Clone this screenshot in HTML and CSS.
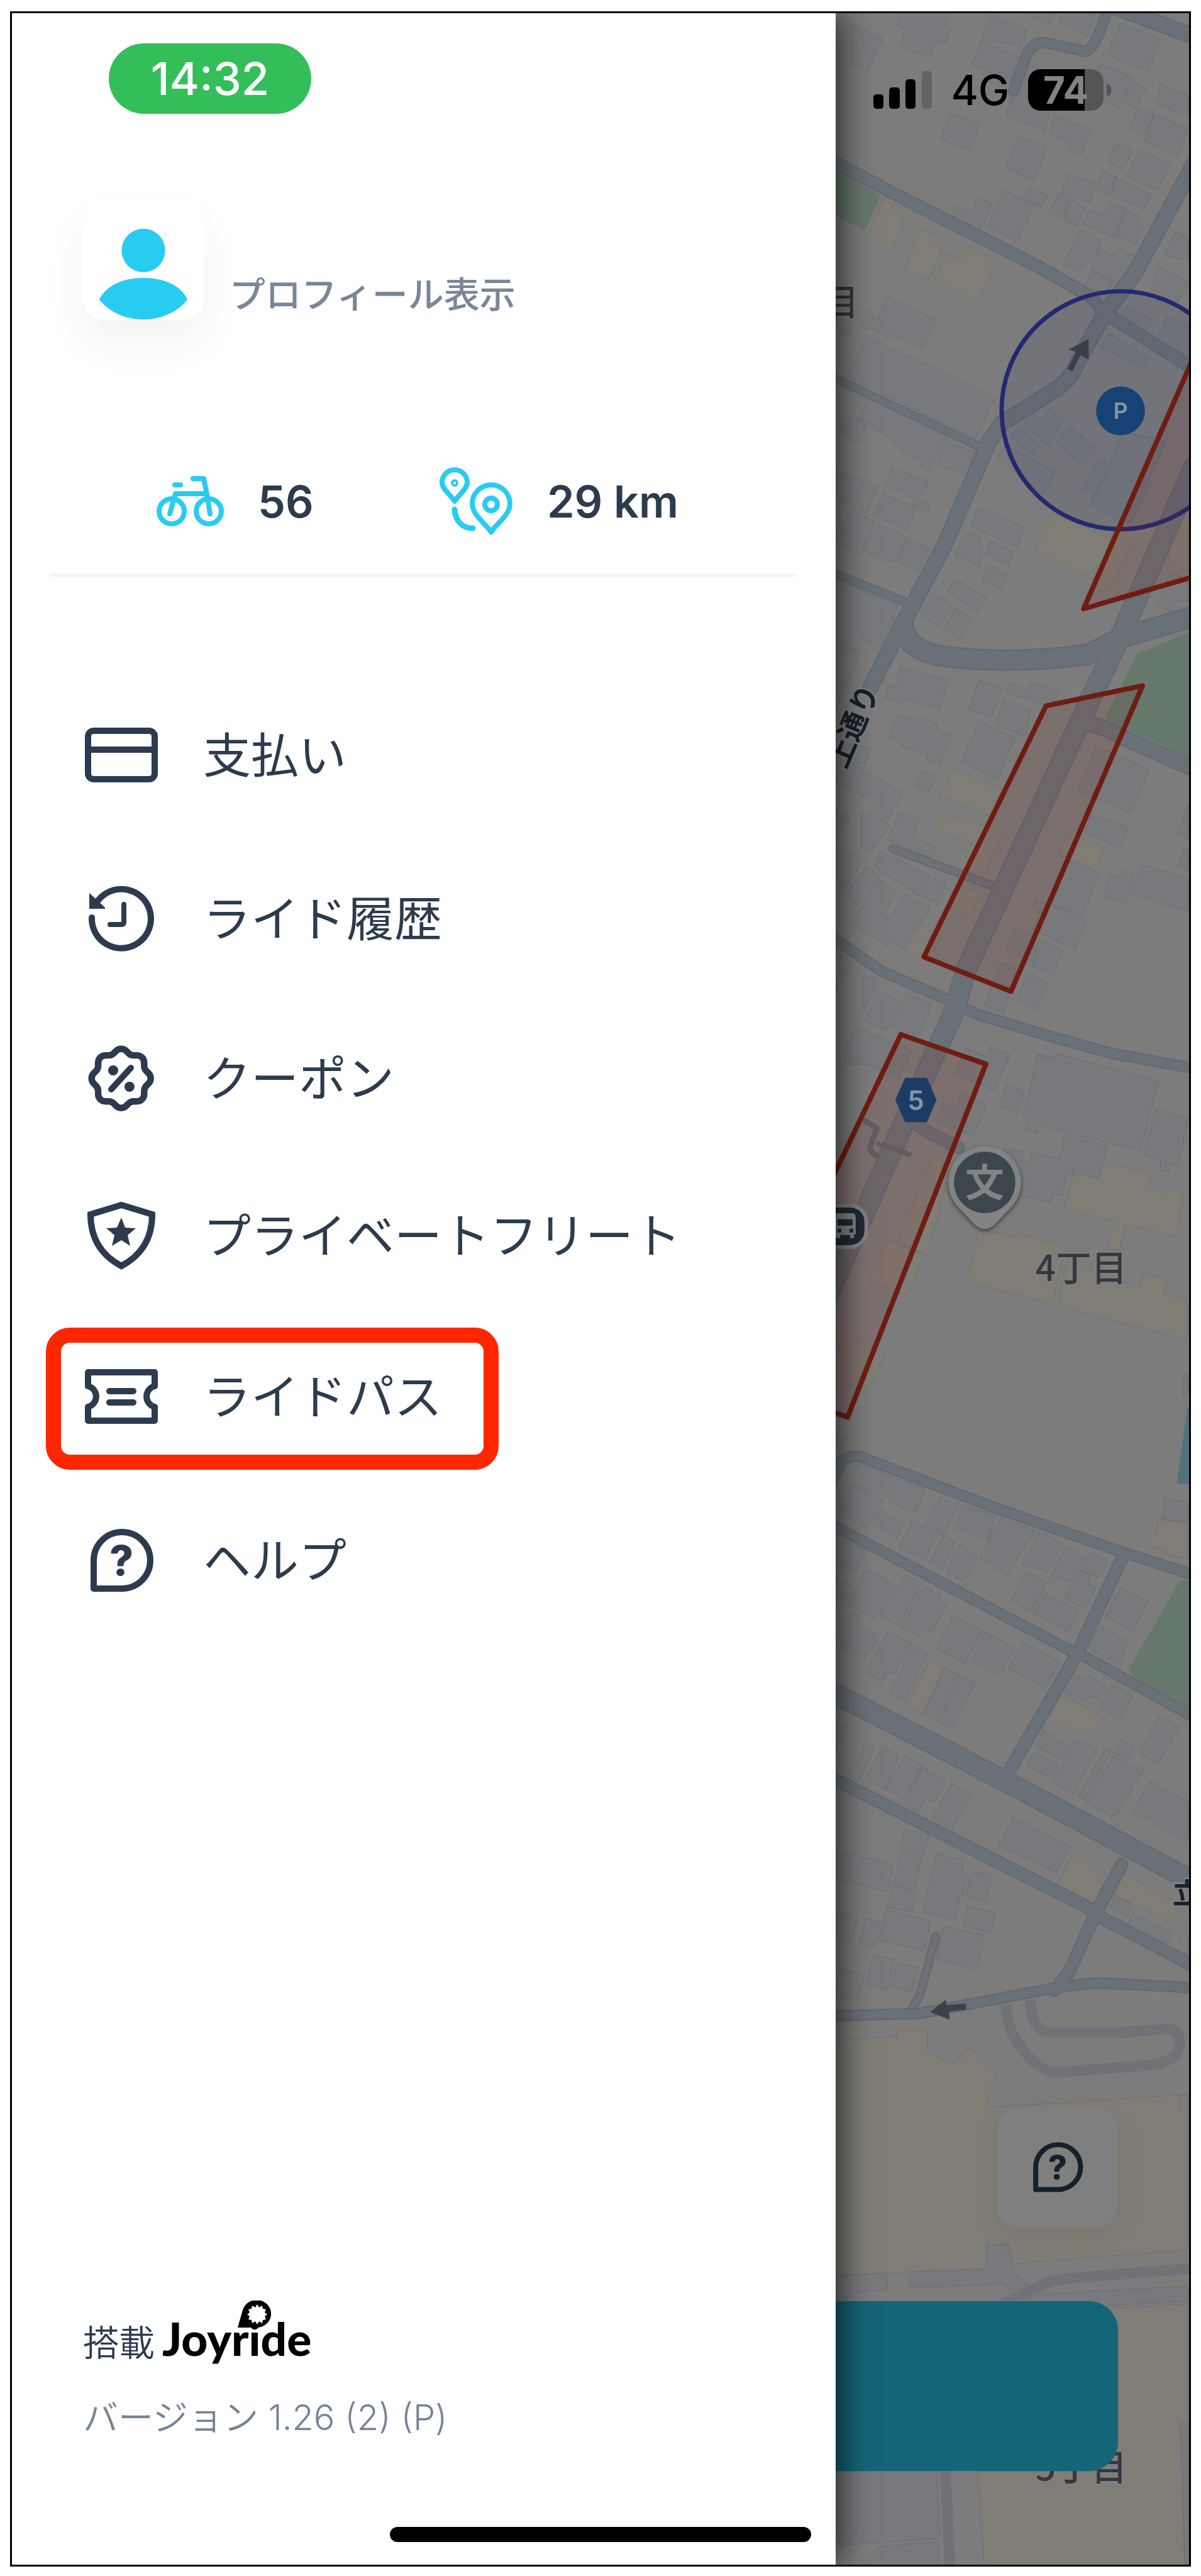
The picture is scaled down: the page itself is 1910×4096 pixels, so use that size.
FILE: index.html
```html
<!DOCTYPE html>
<html lang="ja">
<head>
  <meta charset="UTF-8">
  <meta name="viewport" content="width=device-width, initial-scale=1.0">
  <title>メニュー</title>
  <link rel="stylesheet" href="styles.css">
</head>
<body>
  <div class="phone">
    <aside class="drawer">
      <div class="clock">14:32</div>

      <a class="profile" href="#profile">
        <span class="avatar">
          <svg viewBox="0 0 196 196" aria-hidden="true">
            <circle cx="98" cy="84" r="35"/>
            <path d="M27 163C38 140 66 128 98 128S158 140 169 163C152 184 126 195 98 195S44 184 27 163Z"/>
          </svg>
        </span>
        <span class="profile-text">プロフィール表示</span>
      </a>

      <div class="stats">
        <div class="stat">
          <svg class="bike" viewBox="0 0 107 80" aria-hidden="true">
            <circle cx="24" cy="56" r="20"/>
            <circle cx="83" cy="56" r="20"/>
            <path d="M58 4H75L81 34L85 60M79 28H30L21 60"/>
            <path d="M29 14H38" stroke-width="8"/>
          </svg>
          <span>56</span>
        </div>
        <div class="stat">
          <svg class="pins" viewBox="0 0 117 109" aria-hidden="true">
            <path d="M24 54C18 44 4 35 4 24A20 20 0 0 1 44 24C44 35 30 44 24 54Z"/>
            <circle cx="24" cy="25" r="2"/>
            <path d="M82 103C74 90 52 76 52 58A30 30 0 0 1 112 58C112 76 90 90 82 103Z"/>
            <circle cx="82" cy="59" r="10"/>
            <path d="M24 67C25 85 36 97 53 97" stroke-width="9"/>
          </svg>
          <span>29 km</span>
        </div>
      </div>

      <nav class="menu">
        <a href="#payment">
          <svg viewBox="0 0 116 108" aria-hidden="true">
            <rect x="5" y="15" width="106" height="77" rx="9"/>
            <path d="M5 45H111"/>
          </svg>
          <span>支払い</span>
        </a>
        <a href="#history">
          <svg viewBox="0 0 116 108" aria-hidden="true">
            <path d="M20 26A47 47 0 1 1 11 52"/>
            <path d="M62 31V59Q62 63 58 63H40" stroke-width="8"/>
            <path class="solid" d="M7 13L17 22L32 36V38H7Z"/>
          </svg>
          <span>ライド履歴</span>
        </a>
        <a href="#coupon">
          <svg viewBox="0 0 116 108" aria-hidden="true">
            <path class="rosette" transform="translate(-5 -9) scale(5.22)" d="M5 7.2a2.2 2.2 0 0 1 2.2 -2.2h1a2.2 2.2 0 0 0 1.55 -.64l.7 -.7a2.2 2.2 0 0 1 3.12 0l.7 .7c.412 .41 .97 .64 1.55 .64h1a2.2 2.2 0 0 1 2.2 2.2v1c0 .58 .23 1.138 .64 1.55l.7 .7a2.2 2.2 0 0 1 0 3.12l-.7 .7a2.2 2.2 0 0 0 -.64 1.55v1a2.2 2.2 0 0 1 -2.2 2.2h-1a2.2 2.2 0 0 0 -1.55 .64l-.7 .7a2.2 2.2 0 0 1 -3.12 0l-.7 -.7a2.2 2.2 0 0 0 -1.55 -.64h-1a2.2 2.2 0 0 1 -2.2 -2.2v-1a2.2 2.2 0 0 0 -.64 -1.55l-.7 -.7a2.2 2.2 0 0 1 0 -3.12l.7 -.7a2.2 2.2 0 0 0 .64 -1.55v-1"/>
            <path d="M73 37L42 71"/>
            <circle class="solid" cx="45" cy="41" r="8"/>
            <circle class="solid" cx="71" cy="67" r="8"/>
          </svg>
          <span>クーポン</span>
        </a>
        <a href="#fleet">
          <svg viewBox="0 0 116 108" aria-hidden="true">
            <path class="shield" d="M58 5L107 20C107 55 92 84 58 102C24 84 9 55 9 20Z"/>
            <path class="solid" d="M58 25L64 41L81 42L68 53L72 70L58 61L43 70L47 53L34 42L51 41Z"/>
          </svg>
          <span>プライベートフリート</span>
        </a>
        <a class="current" href="#ridepass">
          <svg viewBox="0 0 116 108" aria-hidden="true">
            <path d="M5 15H111V37A17 17 0 0 0 111 70V92H5V70A17 17 0 0 0 5 37Z"/>
            <path d="M39 45H77M39 63H77"/>
          </svg>
          <span>ライドパス</span>
        </a>
        <a href="#help">
          <svg viewBox="0 0 116 108" aria-hidden="true">
            <path d="M14 99V54A45 45 0 1 1 59 99Z"/>
            <text x="58" y="78">?</text>
          </svg>
          <span>ヘルプ</span>
        </a>
      </nav>

      <footer class="footer">
        <div class="powered">
          <span>搭載</span>
          <span class="logo">Joyride
            <svg viewBox="0 0 54 44" aria-hidden="true">
              <path d="M0 43L8 15A23 22 0 1 1 31 43Z"/>
              <path class="sun" d="M31 6L34 11L39 8L40 13L45 14L43 19L47 22L43 25L45 30L40 31L39 36L34 33L31 38L28 33L23 36L22 31L17 30L19 25L15 22L19 19L17 14L22 13L23 8L28 11Z"/>
            </svg>
          </span>
        </div>
        <p class="version">バージョン 1.26 (2) (P)</p>
      </footer>
    </aside>

    <main class="map">
      <svg class="map-canvas" viewBox="1338 21 564 4081" preserveAspectRatio="xMinYMin slice" aria-hidden="true">
        <defs>
          <g id="roads">
            <path class="w16" d="M1622 145L1638 101Q1648 66 1672 68L1737 82Q1752 80 1772 15"/>
            <path class="w24" d="M1760 2L1910 58"/>
            <path class="w20" d="M1330 256L1435 311L1569 379L1664 427L1745 473L1768 500L1910 589"/>
            <path class="w24" d="M1910 262L1814 439L1768 500L1726 575Q1712 610 1684 625L1603 676L1584 703L1511 872L1450 987L1393 1098"/>
            <path class="w12" d="M1330 601L1576 717M1330 913L1454 963"/>
            <path class="w32" d="M1446 1000Q1450 1036 1504 1047Q1615 1062 1741 1045L1795 1018L1910 984"/>
            <path class="w32" d="M1910 746L1794 1014L1745 1116L1546 1549L1527 1616L1492 1692L1442 1804L1389 1926L1300 2125"/>
            <path class="w24" d="M1741 1155Q1770 1162 1798 1178L1910 1228"/>
            <path class="w16" d="M1330 1495L1412 1551L1504 1591L1565 1620L1664 1650L1779 1682L1910 1706"/>
            <path class="w16" d="M1330 2370L1344 2340Q1354 2322 1377 2326L1588 2406L1795 2478L1910 2515"/>
            <path class="w16" d="M1330 2434L1714 2636L1733 2644L1910 2742"/>
            <path class="w20" d="M1795 2489L1722 2644L1615 2828"/>
            <path class="w32" d="M1330 2701L1611 2845L1910 3005"/>
            <path class="w20" d="M1330 2838L1741 3046L1764 3063L1910 3139"/>
            <path class="w20" d="M1795 2977L1752 3058L1710 3150L1687 3178"/>
            <path class="w16" d="M1330 3219L1473 3215L1684 3175L1752 3166L1910 3174"/>
            <path class="w20" d="M1450 1785L1490 1810L1534 1832"/>
          </g>
          <g id="lanes">
            <path class="w12" d="M1429 1355L1595 1417M1498 3092L1473 3184L1460 3208"/>
          </g>
        </defs>

        <rect class="ground" x="1300" y="0" width="640" height="4120"/>

        <!-- parks and water -->
        <path class="park" d="M1338 270L1410 313L1385 368L1338 345ZM1819 1044L1910 1007V1214L1768 1147ZM1888 2524H1910V2732L1818 2682L1806 2666Z"/>
        <path class="water" d="M1900 2248L1910 2240V2370L1883 2369Z"/>

        <!-- tile 1 -->
        <g transform="translate(1320 0) scale(.3827 .676)">
          <path class="block" d="M116 55L243 92L180 168L116 153ZM325 20L305 62L340 70L315 108L437 137L468 98L505 102L530 68L500 60L520 25ZM695 35L846 70L815 108L775 104L655 95ZM655 97L808 135L770 192L615 152ZM800 20L965 30L940 56ZM1010 20L975 46L1095 87L1130 35ZM1235 55L1400 92L1350 168L1182 130ZM820 145L965 180L955 230L920 310L760 272ZM1150 150L1287 182L1232 255L1130 230ZM530 268L648 293L607 356L486 328ZM958 268L1116 310L1070 365L1020 352V340L943 318ZM810 322L927 348L875 426L756 398ZM1290 193L1343 208L1298 255L1252 240ZM1400 198L1518 225V275L1390 248ZM1310 253L1375 270L1338 320L1272 303ZM1375 270L1518 302L1478 368L1338 332ZM1220 338L1287 355L1245 400L1182 382ZM1318 352L1446 388L1390 450L1262 413ZM1018 412L1135 432L1108 478L992 456ZM1160 404L1220 418L1180 460L1132 446ZM1215 420L1364 458L1332 494L1196 462ZM980 458L1025 470L992 515L938 500ZM1025 470L1090 490L1055 536L1000 518ZM1105 497L1168 507L1190 478L1250 490L1212 560L1078 530ZM1255 497L1310 512V525L1330 535L1300 578L1218 555ZM1068 541L1155 568L1140 600L1060 640L995 626ZM1150 592L1205 604L1232 587L1300 607L1228 670L1110 640ZM1125 640L1200 668L1180 690L1080 680ZM1465 548L1518 560V615L1418 602ZM1395 628L1518 665L1478 712L1365 682ZM747 449L876 485L806 570L680 535ZM855 442L930 463L905 490L836 470ZM550 488L615 500L642 466L700 482L650 543L533 510ZM268 702L468 757L412 822L285 790L278 799L200 778ZM125 720L213 745L190 777L125 768L98 795L47 780V700ZM178 793L712 940L630 1037L94 888ZM185 938L235 950L513 1030L436 1112L400 1103V1093L338 1070L225 1015L145 987ZM88 983L143 990L178 1000L140 1050L60 1020ZM510 1043L628 1067L590 1123L470 1097ZM47 1108L225 1150L178 1211L47 1180ZM285 1105L433 1137L415 1163L375 1178L250 1145ZM245 1167L382 1200L343 1252L205 1217ZM375 1180L443 1190L428 1208L365 1193ZM110 1205L210 1232L155 1307L50 1280ZM230 1238L343 1270L303 1328L240 1322L160 1297ZM345 1275L437 1295L392 1351L312 1330ZM647 1198L835 1247L803 1293L610 1242ZM590 1257L652 1271V1340L546 1312ZM692 1277L786 1303L770 1336L673 1312ZM685 1335L766 1356L738 1392L655 1370ZM550 1368L677 1413L640 1447L513 1397ZM458 1398L535 1430L475 1480L402 1452ZM550 1437L618 1463L565 1510L498 1482ZM1262 722L1366 755L1335 795L1230 757ZM1185 788L1354 844L1328 872L1152 820ZM1430 748L1518 770V840L1385 802ZM940 964L1000 993L932 1052L832 1002L868 978L908 990ZM1028 1007L1137 1060L1077 1100L968 1045ZM812 1007L900 1055L868 1075L775 1028ZM755 1050L963 1115L910 1167L725 1082ZM1250 1020L1423 1042L1280 1236L1110 1192ZM1145 1085L1200 1100L1130 1170L1075 1155ZM47 1370L307 1430L235 1530L125 1500L107 1525L150 1540L130 1568H47ZM1440 1352L1518 1370V1420H1470L1448 1445L1388 1430Z"/>
          <path class="shop" d="M243 475L275 480L322 508L335 525L277 597L173 565ZM405 540L475 560L462 580L493 590L435 660L331 635ZM512 598L562 612L596 577L718 615L638 715L457 664ZM950 1210L1276 1293L1195 1388L875 1305ZM1440 1290L1518 1240V1350L1440 1330Z"/>
        </g>

        <!-- tile 2 -->
        <g transform="translate(1320 1000) scale(.3827 .4464)">
          <path class="block" d="M47 70L152 88L47 300ZM315 149L514 190L482 293L325 260L320 275L253 258L270 213L295 218ZM305 318L385 337L400 325L470 350V372L530 392L482 496L430 478V463L320 430V410L270 398ZM647 192L741 222L698 325L601 296ZM775 203L845 225L865 203L980 230L955 290L760 237ZM747 265L858 300L852 350L840 393L714 354ZM647 340L796 399L720 546L572 488ZM105 420L193 437L167 493L110 480ZM47 480L120 490L327 597L270 684L195 650L217 615L183 597L168 610L47 560ZM405 516L463 537L433 597L377 574ZM47 650L108 683L47 765ZM153 672L175 683L202 662L275 712L190 806L153 788ZM317 666L395 692L373 755L467 794L448 830L263 765ZM47 790L162 830L85 945L47 900ZM235 806L440 890L395 965L253 885L205 858ZM455 903L507 922L473 991L403 965ZM180 856L232 900L140 999L85 963ZM235 908L302 955L240 1032L265 1042L202 1115L108 1060ZM343 955L440 1013L325 1155L275 1127L262 1145L217 1117ZM70 1170L125 1207L47 1305ZM162 1255H213V1312L163 1373ZM232 1305L316 1346L258 1447L170 1410ZM340 1311L447 1352L393 1465L282 1433ZM130 1432L361 1522L340 1568H80ZM1135 430L1355 510L1277 669L1056 588ZM1115 670L1267 722L1235 790L1085 740ZM1020 838L1151 885L1075 1038L950 995ZM880 975L1095 1052L1048 1153L870 1088L900 1018L870 1005ZM1190 888L1228 900L1237 875L1293 890L1262 991L1162 968ZM1325 853L1518 900V1020L1280 957ZM1518 640V763L1470 745ZM1505 793L1518 797V875L1477 858ZM792 1080L898 1117L870 1200L756 1155ZM910 1125L998 1158L952 1247L865 1215ZM735 1203L800 1225L750 1383L667 1355ZM850 1243L937 1276L888 1370L803 1337ZM590 1510L680 1540L695 1503L774 1535L760 1568H570ZM890 1532L965 1545L972 1530L1140 1568H880Z"/>
          <path class="shop" d="M540 509L740 583L695 680L478 607ZM490 672L550 688L560 670L745 738L662 902L547 866L572 798L635 810L620 775L510 742L503 756L453 738ZM1018 738L1167 795L1134 872L980 815ZM570 925L649 958L610 1038L525 1010ZM405 1065L488 1110L413 1216L330 1172Z"/>
        </g>

        <!-- tile 3 -->
        <g transform="translate(1320 1600) scale(.3827 .5102)">
          <path class="block" d="M130 77L361 153L313 240L80 162ZM590 145L675 172L697 140L775 165L707 277L542 225ZM575 287L677 318L622 418L468 370L498 316L552 328ZM762 258L836 280L807 347L730 326ZM890 166L966 176L975 162L1393 247L1322 464L1075 420V432L1180 450L1142 550L1040 525L1035 545L1012 542L993 605L950 600L942 628L790 600L750 458L828 470L822 498L852 506L870 472L983 491L1007 407L895 384L888 410L843 400L852 360L830 353ZM1382 336L1518 363L1478 510L1442 505L1437 530L1400 525L1405 495L1335 480ZM47 1350L93 1363L73 1400L47 1395ZM1500 1165L1518 1168V1230H1495Z"/>
          <path class="shop" d="M453 485L530 505L430 793L305 752ZM262 747L416 790L345 920L190 870ZM85 1042L255 1095L190 1205L47 1165V1115ZM1163 500L1368 538L1353 580L1418 597L1422 583L1500 600L1467 735L1255 697L1232 775H1177L1205 687L998 650L1040 535L1145 552ZM645 712L805 736L812 724L1007 765L950 945L594 875ZM1000 838L1020 815L1115 840L1313 895L1332 847L1433 865L1415 913L1518 935V1058L975 952Z"/>
        </g>

        <!-- tile 4 -->
        <g transform="translate(1320 2300) scale(.3827 .574)">
          <path class="block" d="M140 65L290 103L260 158L150 132L162 108L120 95ZM300 105L419 135L380 200L265 170ZM118 122L240 165L180 245L58 203ZM232 193L335 230L302 272L197 235ZM485 157L560 185L495 263L419 235ZM575 181L711 207L687 275L550 245ZM367 225L467 260L420 333L310 297ZM735 216L880 250L762 375L648 330ZM495 265L547 283L492 358L438 340ZM563 290L640 322L598 380L565 388L507 366ZM893 256L920 260L995 288L930 368L865 350L858 357L825 345ZM1008 295L1087 323L1030 394L975 382L958 403L935 393ZM1110 310L1175 332L1180 345L1145 382L1072 363ZM843 367L928 397L863 476L777 444ZM1068 363L1105 373V400L1134 410L1088 468L1003 440ZM925 423L1062 474L1015 533L875 483ZM47 270L175 307L123 369L47 345ZM47 375L122 410L75 462L47 458ZM175 358L281 398L208 496L95 458ZM340 374L404 398L312 514L228 486L292 400L310 407ZM417 407L487 435L483 447L510 458L450 530L415 522L395 545L322 520ZM112 478L151 488L137 510L225 548L175 603L127 592L115 598L72 580L77 565L52 553ZM268 529L363 566L295 648L268 643L240 671L173 645ZM375 571L429 594L332 727L271 706ZM505 631L565 653L470 785L412 763ZM580 655L629 673L530 803L480 782ZM540 486L658 529L585 621L469 578ZM670 534L794 577L735 653L613 612ZM830 561L982 618L923 689L770 634ZM1237 407L1353 447L1288 530L1172 489ZM1150 516L1272 562L1227 622L1100 577ZM1030 646L1092 667L1108 654L1175 690L1145 720L1110 711L1093 725L993 695ZM1197 678L1285 710L1236 775L1148 744ZM1400 767L1481 798L1395 898L1314 870ZM913 807L1023 848L990 888L882 850ZM875 867L974 900L948 937L843 907ZM1047 829L1137 860L1042 983L950 953ZM1178 851L1200 860L1085 1000L1058 990ZM1237 829L1294 852L1262 892L1212 870ZM1205 878L1302 915L1312 904L1331 914L1223 1040L1200 1045L1093 1007ZM1358 947L1518 1003V1115L1286 1034ZM47 780L95 798L47 860ZM172 844L205 857L145 945L100 930ZM243 853L312 877L275 932L258 970L170 943ZM335 877L412 906L330 998L258 970ZM412 907L505 945L460 1007L422 997L392 1033L330 1010ZM530 955L614 988L533 1080L452 1050ZM790 1047L1027 1129L970 1202L727 1129ZM47 1140L288 1180L262 1256L47 1220ZM338 1081L437 1097L412 1160L316 1143ZM318 1150L404 1165L375 1248L290 1236ZM285 1240L383 1255L363 1312L260 1298ZM467 1149L582 1167L575 1197L596 1205L580 1265L568 1263L543 1333L411 1313ZM610 1211L640 1200L699 1208L677 1281L593 1270ZM598 1295L715 1315L695 1370L576 1350ZM257 1307L444 1337L415 1420L225 1390ZM495 1352L669 1377L637 1472L466 1443ZM47 1307L139 1322L112 1394L47 1385ZM175 1328L234 1340L208 1410L146 1400ZM207 1430L294 1444L265 1528L177 1512ZM305 1453L392 1468L366 1536L281 1520ZM62 1470L167 1487L138 1560L47 1545ZM1420 162L1518 170V228L1410 220ZM1210 1264L1286 1290L1262 1323L1195 1300ZM1290 1313L1450 1368L1425 1403L1265 1347Z"/>
          <path class="shop" d="M438 612L497 633L407 762L340 740ZM993 706L1167 771L1137 810L1100 803L1080 817L933 775ZM1040 1147L1180 1210L1125 1287L972 1236ZM1250 1207L1490 1290L1455 1346L1210 1262ZM1393 220L1518 230V328L1433 320V306L1357 297L1363 260L1387 257ZM1518 1350V1435L1480 1400Z"/>
        </g>

        <!-- tile 5 -->
        <g transform="translate(1320 3150) scale(.3827 .6173)">
          <path class="shop" d="M47 175L302 165V152L432 149V207L537 235L605 195L727 262L668 310L700 348L1518 315V717L775 753L770 703H676V766L47 782ZM640 1290L668 1545H1518V857L1150 870L1200 1290ZM1487 317H1518V360H1487Z"/>
          <path class="block" d="M47 785L260 777L264 820L155 825Q100 835 70 860H47ZM357 773L676 766V703H770L790 775L890 833L1518 810V850L1150 862L850 860L750 805L357 816ZM47 1290H468L483 1463L47 1482ZM160 1545Q190 1500 240 1483L475 1472L480 1545ZM1485 1163H1520V1545H1505Z"/>
        </g>

        <path class="parking" d="M1609 3202Q1612 3230 1620 3246Q1655 3308 1691 3309L1837 3298Q1886 3292 1888 3264Q1888 3238 1862 3240L1787 3246H1684Q1650 3246 1649 3193M1603 3681L1670 3648Q1682 3640 1710 3638L1910 3622M1513 3940L1521 4110"/>

        <use href="#lanes" class="casing"/>
        <use href="#lanes" class="lane"/>
        <use href="#roads" class="casing"/>
        <use href="#roads" class="road"/>

        <!-- station square -->
        <circle class="deck" cx="1370" cy="1840" r="32"/>
        <path class="fence" d="M1386 1790L1404 1802L1394 1828Q1390 1838 1404 1846M1407 1826L1455 1843"/>
        <path class="fence light" d="M1390 1785L1416 1795L1410 1824M1455 1838L1468 1818L1495 1827"/>

        <path class="arrow" d="M1742 541L1710 558L1722 562L1708 589L1716 593L1729 567L1742 574ZM1489 3213L1514 3193L1515 3202L1546 3199V3209L1519 3212L1520 3225Z"/>

        <!-- parking area and no-ride zones -->
        <circle class="area" cx="1793" cy="655" r="190"/>
        <g class="zone">
          <path d="M1734 972L1950 478V909Z"/>
          <path d="M1674 1127L1828 1095L1618 1583L1479 1528Z"/>
          <path d="M1300 1950L1442 1652L1578 1699L1357 2263L1300 2243Z"/>
        </g>

        <circle class="parking-badge" cx="1793" cy="656" r="39"/>
        <text class="badge-text" x="1793" y="669">P</text>

        <path class="route-badge" d="M1433 1756L1449 1721H1484L1499 1756L1484 1792H1449Z"/>
        <text class="badge-text route" x="1466" y="1772">5</text>

        <path class="pin" d="M1576 1830A58 58 0 0 1 1618 1928L1590 1957Q1576 1968 1562 1957L1534 1928A58 58 0 0 1 1576 1830Z"/>
        <circle class="pin-inner" cx="1576" cy="1888" r="49"/>
        <text class="pin-text" x="1576" y="1911">文</text>

        <rect class="bus-badge" x="1290" y="1925" width="97" height="66" rx="26"/>
        <path class="bus" d="M1332 1943Q1332 1937 1338 1937H1364Q1370 1937 1370 1943V1971H1367V1977H1361V1972H1345V1977H1338V1972H1332Z"/>
        <path class="bus-window" d="M1341 1947H1365V1957H1341ZM1341 1962H1347V1968H1341ZM1360 1962H1366V1968H1360Z"/>

        <g class="label">
          <text x="1318" y="503">目</text>
          <text x="1657" y="2046">4丁目</text>
          <text x="1657" y="3961">5丁目</text>
          <text class="street" transform="translate(1354 1229) rotate(-67)">上通り</text>
          <text class="street" x="1876" y="3040">立</text>
        </g>
      </svg>

      <div class="status">
        <svg class="signal" viewBox="0 0 93 60" aria-hidden="true">
          <rect x="0" y="37" width="16" height="23" rx="5"/>
          <rect x="25" y="26" width="17" height="34" rx="5"/>
          <rect x="51" y="13" width="16" height="47" rx="5"/>
          <rect class="weak" x="77" y="0" width="16" height="60" rx="5"/>
        </svg>
        <span class="network">4G</span>
        <span class="battery">74</span>
      </div>

      <div class="actions">
        <button class="help" type="button" aria-label="ヘルプ">
          <svg viewBox="0 0 116 108" aria-hidden="true">
            <path d="M14 99V54A45 45 0 1 1 59 99Z"/>
            <text x="58" y="78">?</text>
          </svg>
        </button>
        <button class="ride" type="button" aria-label="ライド開始"></button>
      </div>
    </main>

    <div class="home-bar"></div>
  </div>
</body>
</html>
```
FILE: styles.css
```css
* {
  box-sizing: border-box;
}

body {
  margin: 0;
  padding: 18px 16px 15px;
  background: #fff;
  color: #2c3b4e;
  font-family: Inter, "Noto Sans CJK JP", sans-serif;
}

a {
  color: inherit;
  text-decoration: none;
}

.phone {
  position: relative;
  display: flex;
  min-height: calc(100vh - 33px);
  border: 3px solid #000;
}

/* ---------- drawer ---------- */

.drawer {
  position: relative;
  z-index: 2;
  flex: 0 0 70%;
  display: flex;
  flex-direction: column;
  padding: 48px 60px 194px;
  background: #fff;
  box-shadow: 8px 0 48px rgba(0, 0, 0, 0.7);
  clip-path: inset(0 -100px 0 0);
}

.clock {
  align-self: flex-start;
  width: 322px;
  margin-left: 94px;
  border-radius: 56px;
  background: #34be59;
  color: #fff;
  font-size: 72px;
  font-weight: 500;
  line-height: 112px;
  text-align: center;
}

.profile {
  display: flex;
  align-items: flex-end;
  gap: 40px;
  margin: 134px 0 0 52px;
}

.avatar {
  width: 194px;
  height: 194px;
  border-radius: 36px;
  background: #fff;
  box-shadow: 0 36px 72px rgba(0, 0, 0, 0.05);
}

.avatar svg {
  display: block;
  fill: #29ccf1;
}

.profile-text {
  color: #798697;
  font-size: 57px;
  font-weight: 500;
  line-height: 80px;
}

.stats {
  display: grid;
  grid-template-columns: 450px auto;
  margin-top: 233px;
  padding: 0 0 60px 170px;
  border-bottom: 5px solid #f5f5f5;
}

.stat {
  display: flex;
  align-items: center;
  gap: 54px;
  height: 110px;
  font-size: 70px;
  font-weight: 600;
}

.stat svg {
  fill: none;
  stroke: #29ccf1;
  stroke-width: 8px;
  stroke-linecap: round;
  stroke-linejoin: round;
}

.bike {
  width: 107px;
}

.pins {
  width: 117px;
}

.menu {
  display: grid;
  grid-template-rows: 260px 260px 248px 252px 260px 260px;
  justify-items: start;
  align-items: center;
  margin: 154px 0 0 56px;
}

.menu a {
  position: relative;
  display: flex;
  align-items: center;
  gap: 72px;
  font-size: 76px;
  font-weight: 400;
  line-height: 108px;
}

.menu svg {
  width: 116px;
}

.menu svg,
.help svg {
  fill: none;
  stroke: #2c3b4e;
  stroke-width: 10px;
  stroke-linecap: round;
  stroke-linejoin: round;
}

.menu .rosette {
  stroke-width: 2px;
}

.menu .shield {
  stroke-linejoin: miter;
}

.menu .solid {
  fill: #2c3b4e;
  stroke: none;
}

.menu text,
.help text {
  fill: #2c3b4e;
  stroke: none;
  font: 800 66px Inter, sans-serif;
  text-anchor: middle;
}

.menu .current::after {
  content: "";
  position: absolute;
  inset: -56px -90px -62px -62px;
  border: 24px solid #ff2600;
  border-radius: 38px;
}

.footer {
  margin: auto 0 0 53px;
  font-size: 57px;
  font-weight: 350;
  line-height: 80px;
}

.powered {
  display: flex;
  gap: 12px;
  margin-bottom: 38px;
}

.logo {
  position: relative;
  color: #000;
  font-family: Lato, sans-serif;
  font-size: 73px;
  font-weight: 900;
  line-height: 64px;
}

.logo svg {
  position: absolute;
  left: 120px;
  top: -28px;
  width: 54px;
}

.logo .sun {
  fill: #fff;
}

.version {
  margin: 0;
  color: #768394;
  font-size: 56px;
}

/* ---------- map ---------- */

.map {
  position: relative;
  flex: 1;
  display: flex;
  flex-direction: column;
  justify-content: space-between;
  overflow: hidden;
  background: #7c7c7c;
}

.map-canvas {
  position: absolute;
  inset: 0;
  width: 100%;
  height: 100%;
}

.map-canvas path {
  vector-effect: non-scaling-stroke;
}

.ground { fill: #7c7c7c; }
.park { fill: #66786c; }
.water { fill: #50727c; }

.block {
  fill: #77797c;
  stroke: #6c6d6f;
}

.shop {
  fill: #7f7d76;
  stroke: #73716c;
}

.deck { fill: #7c7c7c; }

.fence {
  fill: none;
  stroke: #62646b;
  stroke-width: 9px;
  stroke-linecap: round;
  stroke-linejoin: round;
}

.fence.light {
  stroke: #807d7c;
  stroke-width: 4px;
}

#roads path,
#lanes path {
  fill: none;
  stroke-width: calc(var(--w) + var(--edge));
  stroke-linejoin: round;
  stroke-linecap: round;
}

.w12 { --w: 10px; }
.w16 { --w: 14px; }
.w20 { --w: 17px; }
.w24 { --w: 22px; }
.w32 { --w: 30px; }

.casing {
  --edge: 4px;
  stroke: #62696e;
}

.road {
  --edge: 0px;
  stroke: #6a7077;
}

.lane {
  --edge: 0px;
  stroke: #6f7076;
}

.parking {
  fill: none;
  stroke: #717277;
  stroke-width: 17px;
}

.arrow { fill: #3d4248; }

.area {
  fill: rgba(40, 40, 110, 0.1);
  stroke: #232a70;
  stroke-width: 7px;
}

.zone path {
  fill: rgba(124, 20, 10, 0.11);
  stroke: #6f1d12;
  stroke-width: 8px;
  stroke-linejoin: round;
}

.parking-badge { fill: #164275; }
.route-badge { fill: #1c3c66; }

.badge-text {
  fill: #8494a8;
  font-size: 36px;
  font-weight: 600;
  text-anchor: middle;
}

.badge-text.route {
  font-size: 42px;
}

.pin {
  fill: #828384;
  filter: drop-shadow(0 3px 4px rgba(0, 0, 0, 0.5));
}

.pin-inner { fill: #3b474d; }

.pin-text {
  fill: #828384;
  font-size: 62px;
  font-weight: 700;
  text-anchor: middle;
}

.bus-badge {
  fill: #1e2a33;
  stroke: #7f8283;
  stroke-width: 6px;
}

.bus { fill: #7f8384; }
.bus-window { fill: #1e2a33; }

.label text {
  fill: #36383c;
  stroke: #7f7f80;
  stroke-width: 6px;
  paint-order: stroke;
  font-family: "Noto Sans CJK JP", sans-serif;
  font-size: 57px;
  font-weight: 500;
}

.label .street {
  fill: #16202c;
  font-size: 46px;
  font-weight: 700;
}

.status {
  position: relative;
  display: flex;
  align-items: center;
  margin: 89px 0 0 60px;
  height: 66px;
  color: #000;
}

.signal {
  width: 93px;
}

.signal .weak {
  fill: #636363;
}

.network {
  margin-left: 30px;
  font-size: 66px;
  font-weight: 500;
}

.battery {
  position: relative;
  width: 120px;
  margin-left: 30px;
  border-radius: 20px;
  background: linear-gradient(to right, #000 75%, #555 75%);
  color: #838383;
  font-size: 60px;
  font-weight: 700;
  line-height: 66px;
  text-align: center;
}

.battery::after {
  content: "";
  position: absolute;
  left: 125px;
  top: 24px;
  width: 7px;
  height: 19px;
  border-radius: 0 8px 8px 0;
  background: #555;
}

.actions {
  position: relative;
  display: flex;
  flex-direction: column;
  align-items: flex-end;
  gap: 116px;
  padding: 0 113px 149px 0;
}

.actions button {
  border: 0;
  padding: 0;
}

.help {
  width: 192px;
  height: 192px;
  border-radius: 36px;
  background: #7f7f7f;
  box-shadow: 0 12px 40px rgba(80, 75, 60, 0.12);
}

.help svg {
  width: 92px;
  stroke: #16202a;
}

.help text {
  fill: #16202a;
}

.ride {
  width: 100%;
  height: 270px;
  border-radius: 0 46px 46px 0;
  background: #146577;
}

.home-bar {
  position: absolute;
  z-index: 3;
  left: 50%;
  bottom: 36px;
  width: 670px;
  height: 24px;
  margin-left: -335px;
  border-radius: 12px;
  background: #000;
}
```
